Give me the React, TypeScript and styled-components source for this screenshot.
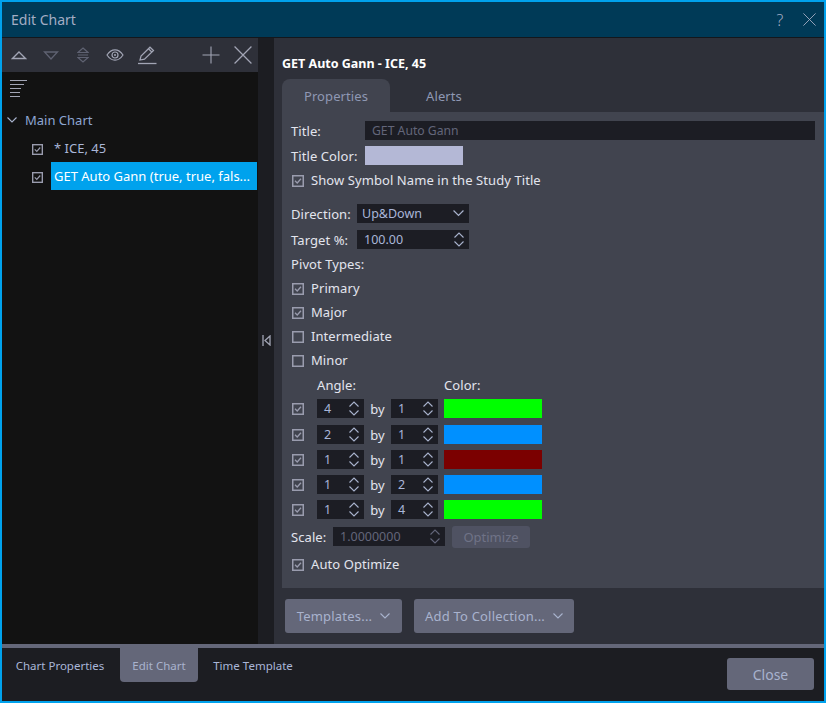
import React from "react";
import styled, { createGlobalStyle } from "styled-components";

const GlobalStyle = createGlobalStyle`
  * { box-sizing: border-box; }
  html, body { margin: 0; padding: 0; background: #00a2ed; }
  body { font-family: "Noto Sans", "Open Sans", sans-serif; font-size: 13px; }
`;

const Window = styled.div`
  width: 826px;
  height: 703px;
  border: 2px solid #00a2ed;
  display: flex;
  flex-direction: column;
  overflow: hidden;
`;

const TitleBar = styled.header`
  height: 36px;
  flex: none;
  background: #003a57;
  border-bottom: 1px solid #14171c;
  display: flex;
  align-items: center;
  padding: 0 8px 0 9px;
  color: #a4adc4;
  font-size: 14px;
`;

const TitleText = styled.span`
  flex: 1;
`;

const HelpMark = styled.span`
  color: #a4adc4;
  font-size: 16px;
  font-weight: 300;
  width: 10px;
  text-align: center;
  margin-right: 18px;
`;

const Main = styled.div`
  flex: 1;
  min-height: 0;
  display: flex;
`;

const LeftPane = styled.aside`
  width: 256px;
  flex: none;
  background: #121212;
  display: flex;
  flex-direction: column;
`;

const Toolbar = styled.div`
  height: 34px;
  flex: none;
  background: #2e3039;
  display: flex;
  align-items: center;
  padding-left: 8px;
`;

const ToolSlot = styled.span<{ $width: number }>`
  width: ${(p) => p.$width}px;
  flex: none;
  display: flex;
  align-items: center;
  justify-content: center;
`;

const ToolSpacer = styled.span`
  flex: 1;
`;

const Icon = styled.svg`
  display: block;
  flex: none;
`;

const SortRow = styled.div`
  height: 38px;
  padding: 8px 0 0 8px;
`;

const TreeHead = styled.div`
  height: 20px;
  display: flex;
  align-items: center;
  gap: 8px;
  padding-left: 5px;
  color: #8ea6d2;
`;

const TreeRow = styled.div<{ $top: number }>`
  height: 28px;
  margin-top: ${(p) => p.$top}px;
  display: flex;
  align-items: center;
  padding-left: 30px;
`;

const TreeBox = styled.span`
  flex: none;
  width: 12px;
  margin-top: 2px;
`;

const TreeLabel = styled.span<{ $selected?: boolean }>`
  width: 206px;
  height: 28px;
  margin-left: 7px;
  padding-left: 3px;
  line-height: 28px;
  white-space: nowrap;
  overflow: hidden;
  background: ${(p) => (p.$selected ? "#00a2ed" : "transparent")};
  color: ${(p) => (p.$selected ? "#ffffff" : "#a9b6d8")};
`;

const Splitter = styled.div`
  width: 16px;
  flex: none;
  background: #1c1d22;
  display: flex;
  align-items: center;
  justify-content: center;
  padding-bottom: 2px;
`;

const RightPane = styled.section`
  flex: 1;
  min-width: 0;
  background: #2e3039;
  display: flex;
  flex-direction: column;
  padding-left: 8px;
`;

const StudyName = styled.h2`
  margin: 0;
  height: 41px;
  padding-top: 17px;
  line-height: 18px;
  font-size: 12.5px;
  font-weight: 700;
  color: #ffffff;
`;

const Tabs = styled.div`
  height: 33px;
  flex: none;
  display: flex;
  letter-spacing: 0.1px;
`;

const Tab = styled.div<{ $active?: boolean }>`
  width: 108px;
  display: flex;
  align-items: center;
  justify-content: center;
  border-radius: 8px 8px 0 0;
  background: ${(p) => (p.$active ? "#41444f" : "transparent")};
  color: #8f98b4;
`;

const TabBody = styled.div`
  height: 476px;
  flex: none;
  background: #41444f;
  padding: 9px 9px 0;
  color: #e3e5ee;
  letter-spacing: 0.08px;
`;

const Row = styled.div<{ $top?: number }>`
  height: 19px;
  margin-top: ${(p) => p.$top ?? 0}px;
  display: flex;
  align-items: center;
  white-space: nowrap;
`;

const Label = styled.span<{ $width?: number }>`
  flex: none;
  width: ${(p) => (p.$width ? `${p.$width}px` : "auto")};
`;

const PivotHead = styled(Row)`
  padding-bottom: 2px;
`;

const AngleHead = styled(Row)`
  padding-left: 26px;
`;

const AngleRow = styled(Row)`
  padding-left: 1px;
`;

const TextField = styled.div`
  flex: 1;
  height: 19px;
  background: #1c1d24;
  color: #63667a;
  font-size: 12.2px;
  letter-spacing: 0;
  line-height: 20px;
  padding-left: 7px;
`;

const Swatch = styled.div<{ $color: string; $left?: number }>`
  width: 98px;
  height: 19px;
  flex: none;
  margin-left: ${(p) => p.$left ?? 0}px;
  background: ${(p) => p.$color};
`;

const Field = styled.div<{ $width: number; $disabled?: boolean; $left?: number; $inset?: number }>`
  width: ${(p) => p.$width}px;
  height: 19px;
  flex: none;
  margin-left: ${(p) => p.$left ?? 0}px;
  background: #1c1d24;
  color: ${(p) => (p.$disabled ? "#63667a" : "#a9b6d8")};
  font-size: 12.5px;
  letter-spacing: 0;
  display: flex;
  align-items: center;
  justify-content: space-between;
  padding: 0 5px 0 ${(p) => p.$inset ?? 7}px;
`;

const FieldValue = styled.span`
  margin-top: -1px;
`;

const CheckRow = styled(Row)`
  padding-left: 1px;
  gap: 7px;
`;

const CheckLabel = styled.span`
  margin-top: -2px;
`;

const By = styled.span`
  width: 27px;
  text-align: center;
  flex: none;
`;

const Optimize = styled.div`
  width: 78px;
  height: 22px;
  flex: none;
  margin-left: 7px;
  border-radius: 3px;
  background: #4f5262;
  color: #6f7387;
  letter-spacing: 0;
  display: flex;
  align-items: center;
  justify-content: center;
`;

const ActionBar = styled.div`
  flex: 1;
  display: flex;
  gap: 12px;
  padding: 11px 0 0 3px;
`;

const ActionButton = styled.div<{ $width: number }>`
  width: ${(p) => p.$width}px;
  height: 34px;
  border-radius: 3px;
  background: #646779;
  color: #a9b3ce;
  letter-spacing: 0.2px;
  display: flex;
  align-items: center;
  justify-content: center;
  gap: 8px;
`;

const Footer = styled.footer`
  height: 57px;
  flex: none;
  border-top: 4px solid #646779;
  background: #1c1d22;
  display: flex;
  padding-right: 10px;
`;

const FooterTab = styled.div<{ $active?: boolean; $width: number; $end?: number }>`
  width: ${(p) => p.$width}px;
  height: 34px;
  flex: none;
  margin-right: ${(p) => p.$end ?? 0}px;
  border-radius: 0 0 4px 4px;
  background: ${(p) => (p.$active ? "#646779" : "transparent")};
  color: ${(p) => (p.$active ? "#a9b3ce" : "#a9b6d8")};
  font-size: 11.5px;
  display: flex;
  align-items: center;
  justify-content: center;
`;

const FooterSpacer = styled.div`
  flex: 1;
`;

const CloseButton = styled.div`
  width: 87px;
  height: 32px;
  margin-top: 10px;
  border-radius: 3px;
  background: #646779;
  color: #a9b3ce;
  font-size: 14px;
  display: flex;
  align-items: center;
  justify-content: center;
`;

const Check = ({ checked = true, size = 12 }: { checked?: boolean; size?: number }) => (
  <Icon width={size} height={size} viewBox="0 0 12 12">
    <rect x="0.75" y="0.75" width="10.5" height="10.5" fill="none" stroke="#9a9cae" strokeWidth="1.5" />
    {checked && <path d="M3 5.8 L5.2 8 L9 3.8" fill="none" stroke="#9a9cae" strokeWidth="1.3" />}
  </Icon>
);

const Chevron = ({ color = "#a9b3ce", size = 10 }: { color?: string; size?: number }) => (
  <Icon width={size} height={size * 0.6} viewBox="0 0 10 6">
    <path d="M0.5 0.5 L5 5 L9.5 0.5" fill="none" stroke={color} strokeWidth="1.1" />
  </Icon>
);

const Spin = ({ color = "#a9b3ce" }: { color?: string }) => (
  <Icon width="10" height="15" viewBox="0 0 10 15">
    <path d="M0.5 5.5 L5 1 L9.5 5.5 M0.5 9.5 L5 14 L9.5 9.5" fill="none" stroke={color} strokeWidth="1.1" />
  </Icon>
);

const CloseX = ({ size, color }: { size: number; color: string }) => (
  <Icon width={size} height={size} viewBox="0 0 16 16">
    <path d="M0.5 0.5 L15.5 15.5 M15.5 0.5 L0.5 15.5" fill="none" stroke={color} strokeWidth="1.1" />
  </Icon>
);

const toolColor = "#a2a5b5";
const toolDim = "#5f6272";

const angles = [
  { left: 4, right: 1, color: "#00ff00", top: 5 },
  { left: 2, right: 1, color: "#0090ff", top: 7 },
  { left: 1, right: 1, color: "#7b0000", top: 6 },
  { left: 1, right: 2, color: "#0090ff", top: 6 },
  { left: 1, right: 4, color: "#00ff00", top: 6 },
];

const App = () => {
  return (
    <>
      <GlobalStyle />
      <Window>
        <TitleBar>
          <TitleText>Edit Chart</TitleText>
          <HelpMark>?</HelpMark>
          <CloseX size={13} color="#a4adc4" />
        </TitleBar>
        <Main>
          <LeftPane>
            <Toolbar>
              <ToolSlot $width={17}>
                <Icon width="16" height="9" viewBox="0 0 16 9">
                  <path d="M8 1 L14.5 7.5 H1.5 Z" fill="none" stroke={toolColor} strokeWidth="1.3" />
                </Icon>
              </ToolSlot>
              <ToolSlot $width={48}>
                <Icon width="16" height="9" viewBox="0 0 16 9">
                  <path d="M1.5 1 H14.5 L8 8 Z" fill="none" stroke={toolDim} strokeWidth="1.3" />
                </Icon>
              </ToolSlot>
              <ToolSlot $width={16}>
                <Icon width="12" height="16" viewBox="0 0 12 16">
                  <path d="M6 1 L11 5.5 H1 Z M1 10.5 H11 L6 15 Z M1 8 H11" fill="none" stroke={toolDim} strokeWidth="1.2" />
                </Icon>
              </ToolSlot>
              <ToolSlot $width={48}>
                <Icon width="18" height="12" viewBox="0 0 18 12">
                  <path d="M1 6 C4 1.5 6.5 0.8 9 0.8 C11.5 0.8 14 1.5 17 6 C14 10.5 11.5 11.2 9 11.2 C6.5 11.2 4 10.5 1 6 Z" fill="none" stroke={toolColor} strokeWidth="1.2" />
                  <circle cx="9" cy="6" r="3" fill="none" stroke={toolColor} strokeWidth="1.2" />
                  <circle cx="9" cy="6" r="1" fill={toolColor} />
                </Icon>
              </ToolSlot>
              <ToolSlot $width={15}>
                <Icon width="20" height="19" viewBox="0 0 20 19">
                  <path d="M3 14 L4 10 L13 1.2 L16.5 4.5 L7.5 13.2 Z M11.5 2.8 L15 6.2" fill="none" stroke={toolColor} strokeWidth="1.2" />
                  <path d="M1 17.5 H19.5" stroke={toolColor} strokeWidth="1.3" />
                </Icon>
              </ToolSlot>
              <ToolSpacer />
              <ToolSlot $width={35}>
                <Icon width="18" height="18" viewBox="0 0 18 18">
                  <path d="M9 0.5 V17.5 M0.5 9 H17.5" stroke={toolColor} strokeWidth="1.1" />
                </Icon>
              </ToolSlot>
              <ToolSlot $width={30}>
                <CloseX size={18} color={toolColor} />
              </ToolSlot>
            </Toolbar>
            <SortRow>
              <Icon width="18" height="18" viewBox="0 0 18 18">
                <path d="M0 0.5 H17 M0 4.5 H14 M0 8.5 H11 M0 12.5 H10 M0 16.5 H10" stroke="#a2a5b5" strokeWidth="1" />
              </Icon>
            </SortRow>
            <TreeHead>
              <Chevron size={10} />
              <span>Main Chart</span>
            </TreeHead>
            <TreeRow $top={4}>
              <TreeBox><Check size={11} /></TreeBox>
              <TreeLabel>* ICE, 45</TreeLabel>
            </TreeRow>
            <TreeRow $top={0}>
              <TreeBox><Check size={11} /></TreeBox>
              <TreeLabel $selected>GET Auto Gann (true, true, fals...</TreeLabel>
            </TreeRow>
          </LeftPane>
          <Splitter>
            <Icon width="9" height="11" viewBox="0 0 9 11">
              <path d="M1 0 V11 M8 1 L3 5.5 L8 10 Z" fill="none" stroke="#a2a5b5" strokeWidth="1.3" />
            </Icon>
          </Splitter>
          <RightPane>
            <StudyName>GET Auto Gann - ICE, 45</StudyName>
            <Tabs>
              <Tab $active>Properties</Tab>
              <Tab>Alerts</Tab>
            </Tabs>
            <TabBody>
              <Row>
                <Label $width={74}>Title:</Label>
                <TextField>GET Auto Gann</TextField>
              </Row>
              <Row $top={6}>
                <Label $width={74}>Title Color:</Label>
                <Swatch $color="#b4b8d6" />
              </Row>
              <CheckRow $top={6}>
                <Check />
                <CheckLabel>Show Symbol Name in the Study Title</CheckLabel>
              </CheckRow>
              <Row $top={14}>
                <Label $width={66}>Direction:</Label>
                <Field $width={112} $inset={5}>
                  <FieldValue>Up&amp;Down</FieldValue>
                  <Chevron size={11} />
                </Field>
              </Row>
              <Row $top={7}>
                <Label $width={66}>Target %:</Label>
                <Field $width={112}>
                  <FieldValue>100.00</FieldValue>
                  <Spin />
                </Field>
              </Row>
              <PivotHead $top={6}>Pivot Types:</PivotHead>
              <CheckRow $top={5}>
                <Check />
                <CheckLabel>Primary</CheckLabel>
              </CheckRow>
              <CheckRow $top={5}>
                <Check />
                <CheckLabel>Major</CheckLabel>
              </CheckRow>
              <CheckRow $top={5}>
                <Check checked={false} />
                <CheckLabel>Intermediate</CheckLabel>
              </CheckRow>
              <CheckRow $top={5}>
                <Check checked={false} />
                <CheckLabel>Minor</CheckLabel>
              </CheckRow>
              <AngleHead $top={5}>
                <Label $width={127}>Angle:</Label>
                <Label>Color:</Label>
              </AngleHead>
              {angles.map((a, i) => (
                <AngleRow key={i} $top={a.top}>
                  <Check />
                  <Field $width={47} $left={13}>
                    <FieldValue>{a.left}</FieldValue>
                    <Spin />
                  </Field>
                  <By>by</By>
                  <Field $width={47}>
                    <FieldValue>{a.right}</FieldValue>
                    <Spin />
                  </Field>
                  <Swatch $color={a.color} $left={6} />
                </AngleRow>
              ))}
              <Row $top={8}>
                <Label $width={42}>Scale:</Label>
                <Field $width={112} $disabled>
                  <FieldValue>1.0000000</FieldValue>
                  <Spin color="#63667a" />
                </Field>
                <Optimize>Optimize</Optimize>
              </Row>
              <CheckRow $top={9}>
                <Check />
                <CheckLabel>Auto Optimize</CheckLabel>
              </CheckRow>
            </TabBody>
            <ActionBar>
              <ActionButton $width={117}>
                <span>Templates...</span>
                <Chevron size={10} />
              </ActionButton>
              <ActionButton $width={160}>
                <span>Add To Collection...</span>
                <Chevron size={10} />
              </ActionButton>
            </ActionBar>
          </RightPane>
        </Main>
        <Footer>
          <FooterTab $width={116} $end={2}>Chart Properties</FooterTab>
          <FooterTab $width={78} $active>Edit Chart</FooterTab>
          <FooterTab $width={110}>Time Template</FooterTab>
          <FooterSpacer />
          <CloseButton>Close</CloseButton>
        </Footer>
      </Window>
    </>
  );
};

export default App;
